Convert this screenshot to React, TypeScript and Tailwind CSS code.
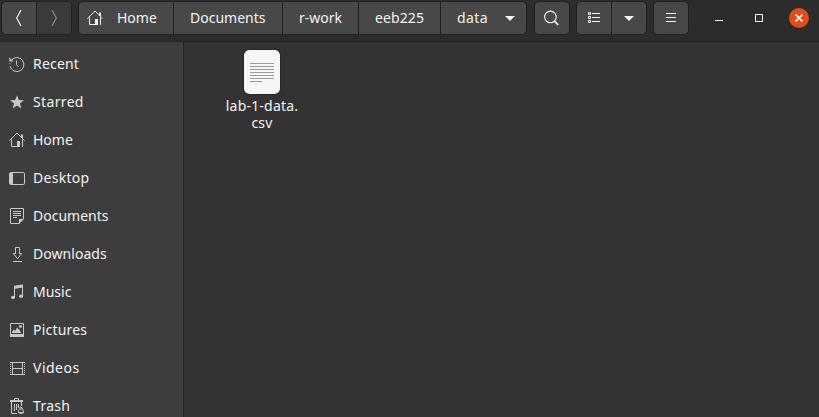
import type { ReactNode } from 'react';

function Icon({ children, className = '' }: { children: ReactNode; className?: string }) {
  return (
    <svg viewBox="0 0 16 16" width="16" height="16" fill="none" stroke="currentColor" className={`shrink-0 ${className}`}>
      {children}
    </svg>
  );
}

const HomeIcon = ({ className = '' }: { className?: string }) => (
  <Icon className={className}>
    <path d="M.4 8.6 8 1l7.6 7.6M12.5 5V2.8h1v3.4" />
    <path d="M2.5 7.5v7h7M13.5 7.5V15" />
    <path d="M8 9h3v6H8z" fill="currentColor" stroke="none" />
  </Icon>
);

const RecentIcon = () => (
  <Icon>
    <path d="M2.6 4A7 7 0 1 1 1.1 10.2M.9 8.2v-1" />
    <path d="M.4 1.6v3.9h4.2z" fill="currentColor" stroke="none" />
    <path d="M7.5 4.5v4.2l2 2" />
  </Icon>
);
const StarIcon = () => (
  <Icon>
    <path d="M8 1.2l1.8 4.8 5.2.2-4.1 3.2 1.5 5L8 11.6l-4.4 2.8 1.5-5L1 6.2 6.2 6z" fill="currentColor" stroke="none" />
  </Icon>
);
const DesktopIcon = () => (
  <Icon>
    <rect x=".5" y="2.5" width="15" height="12" rx="1.3" />
    <path d="M1 3h3v11H1z" fill="currentColor" stroke="none" />
  </Icon>
);
const DocumentsIcon = () => (
  <Icon>
    <path d="M14.5 11V.5h-13v15h9" />
    <path d="M4 3.5h8M4 5.5h8M4 7.5h8M4 9.5h4" />
    <path d="M10 16v-5h5z" fill="currentColor" stroke="none" />
  </Icon>
);
const DownloadsIcon = () => (
  <Icon>
    <path d="M6.5 1.5h4v6h2.2L8.5 12.8 4.3 7.5h2.2z" />
    <path d="M4 15.5h9" />
  </Icon>
);
const MusicIcon = () => (
  <Icon>
    <path d="M5.5 13.5V2.3l8-1.2V12" />
    <path d="M5 2l9-1.4v3L5 5z" fill="currentColor" stroke="none" />
    <ellipse cx="4" cy="13.4" rx="2" ry="1.7" fill="currentColor" stroke="none" />
    <ellipse cx="12" cy="12.2" rx="2" ry="1.7" fill="currentColor" stroke="none" />
  </Icon>
);
const PicturesIcon = () => (
  <Icon>
    <path d="M1.5 1.5h13v13h-13z" />
    <path d="M1 12h14v3H1zM3 11V9.4l2-1.7 1.3 1L8.2 5.2l1.4 2.3.7-.2 1.7 3.7z" fill="currentColor" stroke="none" />
    <circle cx="11.5" cy="4.5" r="1.4" fill="currentColor" stroke="none" />
  </Icon>
);
const VideosIcon = () => (
  <Icon>
    <path d="M3.5 2v13M13.5 2v13M1 2.5h15M4 8.5h9M1 14.5h15" />
    <path d="M1.5 2v13M15.5 2v13" strokeDasharray="1 1" />
  </Icon>
);
const TrashIcon = () => (
  <Icon>
    <path d="M5.5 2V.5h4V2" />
    <path d="M1 3h13" strokeWidth="2" />
    <path d="M2.5 4v11.5H8M12.5 4v4M5.5 6v7M7.5 6v6M9.5 6v4" />
    <circle cx="12" cy="13.2" r="2.4" />
    <path d="M10.2 10.5l1.6-1.8 2 2.2M9 14.6h6" />
  </Icon>
);

const PLACES: { label: string; icon: () => ReactNode; tracking: string }[] = [
  { label: 'Recent', icon: RecentIcon, tracking: 'tracking-[0.2px]' },
  { label: 'Starred', icon: StarIcon, tracking: 'tracking-[0.35px]' },
  { label: 'Home', icon: HomeIcon, tracking: '' },
  { label: 'Desktop', icon: DesktopIcon, tracking: 'tracking-[0.3px]' },
  { label: 'Documents', icon: DocumentsIcon, tracking: '' },
  { label: 'Downloads', icon: DownloadsIcon, tracking: 'tracking-[0.05px]' },
  { label: 'Music', icon: MusicIcon, tracking: '' },
  { label: 'Pictures', icon: PicturesIcon, tracking: 'tracking-[0.2px]' },
  { label: 'Videos', icon: VideosIcon, tracking: 'tracking-[0.5px]' },
  { label: 'Trash', icon: TrashIcon, tracking: 'tracking-[0.3px]' },
];

const group = 'flex h-[34px] shrink-0 overflow-hidden rounded-[5px] border border-[#202020] bg-[#484848]';
const cell = 'flex items-center border-r border-[#202020]';

const DropArrow = () => (
  <Icon>
    <path d="M3 6h10L8 11z" fill="currentColor" stroke="none" />
  </Icon>
);

export default function App() {
  return (
    <div className="flex h-[417px] w-[819px] flex-col overflow-hidden bg-[#333333] font-['Noto_Sans',sans-serif] text-[14px] text-[#f3f3f3]">
      <header className="flex h-[42px] shrink-0 items-start border-b border-[#232323] bg-[#2c2c2c] pt-px pl-px">
        <div className={`${group} w-[71px]`}>
          <button className={`${cell} w-[35px] justify-center`}>
            <Icon><path d="M10 0 5.7 8l4.3 8" strokeWidth="1.2" /></Icon>
          </button>
          <button className="flex flex-1 items-center justify-center bg-[#3a3a3a] text-[#8a8a8a]">
            <Icon><path d="M6 0l4.3 8L6 16" strokeWidth="1.2" /></Icon>
          </button>
        </div>
        <nav className={`${group} ml-[6px] w-[449px]`}>
          <button className={`${cell} w-[95px] pl-2`}>
            <HomeIcon />
            <span className="ml-[14px] pb-0.5">Home</span>
          </button>
          <button className={`${cell} w-[109px] pb-0.5 pl-4`}>Documents</button>
          <button className={`${cell} w-[76px] pb-0.5 pl-4`}>r-work</button>
          <button className={`${cell} w-[82px] pb-0.5 pl-4 tracking-[0.1px]`}>eeb225</button>
          <button className="flex flex-1 items-center pl-4">
            <span className="w-[45px] pb-0.5 text-left tracking-[0.4px]">data</span>
            <DropArrow />
          </button>
        </nav>
        <button className={`${group} ml-[7px] w-[36px] items-center justify-center`}>
          <Icon>
            <circle cx="6.4" cy="6.9" r="5.8" strokeWidth="1.1" />
            <path d="M10.4 11.2l3.8 3.6" strokeWidth="1.7" />
          </Icon>
        </button>
        <div className={`${group} ml-[6px] w-[71px]`}>
          <button className={`${cell} w-[35px] justify-center`}>
            <Icon>
              <path d="M2.5 2.5h2v2h-2zM2.5 6.5h2v2h-2zM2.5 10.5h2v2h-2zM6 3.5h8M6 7.5h8M6 11.5h8" />
            </Icon>
          </button>
          <button className="flex flex-1 items-center justify-center">
            <DropArrow />
          </button>
        </div>
        <button className={`${group} ml-[6px] w-[36px] items-center justify-center`}>
          <Icon><path d="M3 3.5h10M3 7.5h10M3 11.5h10" /></Icon>
        </button>
        <div className="mt-[7px] ml-[22px] flex h-5 items-center text-white">
          <Icon className="mr-[24px]"><path d="M4 10.5h8" /></Icon>
          <Icon className="mr-[22px]"><path d="M4.5 4.5h7v7h-7z" /></Icon>
          <span className="flex h-5 w-5 items-center justify-center rounded-full bg-[#e24c18]">
            <Icon><path d="M4.5 4.5l7 7M11.5 4.5l-7 7" strokeWidth="1.7" /></Icon>
          </span>
        </div>
      </header>
      <div className="flex min-h-0 flex-1">
        <aside className="w-[184px] shrink-0 overflow-hidden border-r border-[#232323] bg-[#3d3d3d] pt-[3px]">
          {PLACES.map(({ label, icon: PlaceIcon, tracking }) => (
            <div key={label} className="flex h-[38px] items-center gap-2 pl-[9px]">
              <span className="text-[#c8c8c8]"><PlaceIcon /></span>
              <span className={`pb-0.5 ${tracking}`}>{label}</span>
            </div>
          ))}
        </aside>
        <main className="flex-1 pt-2 pl-[38px]">
          <div className="flex w-20 flex-col items-center">
            <svg width="36" height="44" viewBox="0 0 36 44" className="rounded-[5px] shadow-[0_0_2px_rgba(0,0,0,0.6)]">
              <rect width="36" height="44" rx="5" fill="#f6f6f6" />
              <path d="M6 13.5h24M6 16.5h24M6 19.5h24M6 22.5h24M6 25.5h24M6 28.5h24M6 31.5h12" stroke="#9a9a9a" />
            </svg>
            <div className="mt-[3px] text-center leading-[17px] tracking-[0.2px]">lab-1-data.<br />csv</div>
          </div>
        </main>
      </div>
    </div>
  );
}
